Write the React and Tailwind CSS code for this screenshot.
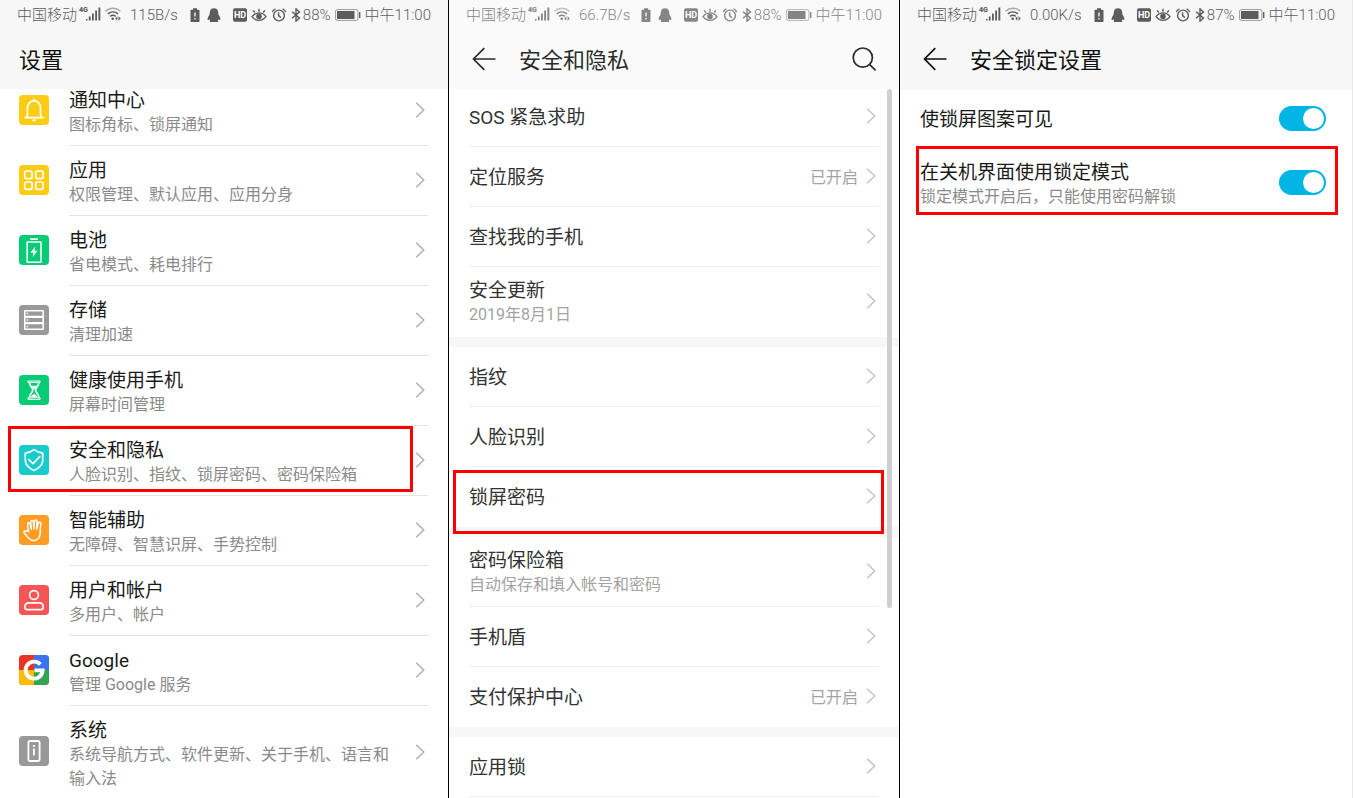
import React, { useState } from "react";

const systemItems = [
  { icon: "bell", title: "通知中心", sub: "图标角标、锁屏通知" },
  { icon: "apps", title: "应用", sub: "权限管理、默认应用、应用分身" },
  { icon: "battery", title: "电池", sub: "省电模式、耗电排行" },
  { icon: "storage", title: "存储", sub: "清理加速" },
  { icon: "hourglass", title: "健康使用手机", sub: "屏幕时间管理" },
  { icon: "shield", title: "安全和隐私", sub: "人脸识别、指纹、锁屏密码、密码保险箱", marked: true },
  { icon: "hand", title: "智能辅助", sub: "无障碍、智慧识屏、手势控制" },
  { icon: "user", title: "用户和帐户", sub: "多用户、帐户" },
  { icon: "google", title: "Google", sub: "管理 Google 服务" },
  { icon: "system", title: "系统", sub: "系统导航方式、软件更新、关于手机、语言和输入法" },
];

const securityGroups = [
  [
    { title: "SOS 紧急求助" },
    { title: "定位服务", value: "已开启" },
    { title: "查找我的手机" },
    { title: "安全更新", sub: "2019年8月1日" },
  ],
  [{ title: "指纹" }, { title: "人脸识别" }, { title: "锁屏密码", marked: true }],
  [
    { title: "密码保险箱", sub: "自动保存和填入帐号和密码" },
    { title: "手机盾" },
    { title: "支付保护中心", value: "已开启" },
  ],
  [{ title: "应用锁" }],
];

const tileColors = {
  bell: "#ffcc14",
  apps: "#ffcc14",
  battery: "#06cc76",
  storage: "#999999",
  hourglass: "#06cc76",
  shield: "#17cccb",
  hand: "#ff9c24",
  user: "#f55555",
  google: "#ea3323",
  system: "#999999",
};

const glyphs = {
  bell: (
    <>
      <path d="M6 22.600h18.400M7.600 22.200c.7-1 .9-2 .9-3.400v-6c0-4 2.700-7 6.500-7s6.500 3 6.500 7v6c0 1.400.2 2.400.9 3.400" />
      <path d="M15 4v2" />
      <path d="M12.800 24.600h4.600c-.3 1.200-1.100 1.800-2.300 1.800s-2-.6-2.300-1.800z" fill="#fff" stroke="none" />
    </>
  ),
  apps: (
    <>
      <rect x="5.700" y="6.200" width="7.400" height="7.400" rx="1.800" />
      <rect x="16.700" y="6.200" width="7.400" height="7.400" rx="1.800" />
      <rect x="5.700" y="17" width="7.400" height="7.400" rx="1.800" />
      <rect x="16.700" y="17" width="7.400" height="7.400" rx="1.800" />
    </>
  ),
  battery: (
    <>
      <path d="M11.800 4.100h6.400" strokeWidth="1.800" />
      <rect x="8.200" y="7" width="13.800" height="20.200" rx="0.500" strokeWidth="1.600" />
      <path d="M16.400 11.200l-5 6.600h3.200l-1 4.400 5-6.400h-3.100z" fill="#fff" stroke="none" />
    </>
  ),
  storage: (
    <>
      <rect x="5" y="5" width="20" height="20" rx="1" fill="#fff" stroke="none" />
      <path d="M6.600 8.600h16.800M6.600 15h16.800M6.600 21.400h16.800" stroke="#999" strokeWidth="4.200" strokeLinecap="butt" />
      <path d="M7.700 8.600h1.500M7.700 15h1.500M7.700 21.400h1.500" strokeWidth="1.500" strokeLinecap="butt" />
    </>
  ),
  hourglass: (
    <>
      <path d="M9.300 6h11.800v1.400H9.300zM9.300 22.800h11.800v1.600H9.300z" strokeWidth="1" />
      <path d="M10.500 7.600c0 4 3.300 5 3.300 7.500s-3.300 3.600-3.300 7.500M19.800 7.600c0 4-3.300 5-3.300 7.500s3.300 3.600 3.300 7.500" />
      <path d="M12 10.800h6.300c-.8 1.600-2.200 2.200-3.100 3.600-1-1.400-2.500-2-3.200-3.600zM15.200 18.500c1.300 1.300 2.600 2 3 3.600h-6.200c.4-1.600 1.900-2.300 3.200-3.600z" fill="#fff" stroke="none" />
    </>
  ),
  shield: (
    <>
      <path d="M15 4.700c2.500 2 5.300 3 8.700 3.400v7.400c0 4.500-3.200 7.400-8.700 10-5.500-2.600-8.700-5.500-8.700-10V8.100c3.400-.4 6.200-1.400 8.700-3.400z" />
      <path d="M9.800 14.600l4.200 4 6.700-6.900" strokeWidth="1.700" />
    </>
  ),
  hand: (
    <path
      d="M9.700 16.800L8.500 9.500c-.2-2 2-2.500 2.500-.6l1.300 5.400-.6-7c-.1-2.200 2.500-2.300 2.700-.2l.5 6.700.6-7.300c.2-2 2.700-1.800 2.600.3l-.4 7.200 1.500-5.600c.6-1.900 2.900-1.300 2.600.6-.5 3-.7 5.200-.6 7.900.1 5-2 8.200-6 8.600h-1.900c-1.700-.2-3-1.400-4.300-3.100-1.200-1.600-2.300-3.100-3.700-4.300-.7-.7-.3-2 .8-2.200 1.300-.2 2.500.200 3.600.9z"
      strokeWidth="1.500"
    />
  ),
  user: (
    <>
      <circle cx="15" cy="10" r="4.400" />
      <path d="M10 17.900h10.200c2.600 0 4 1.900 4 4.200 0 1.900-.6 2.500-2 2.500H7.900c-1.400 0-2-.6-2-2.500 0-2.300 1.500-4.200 4.100-4.200z" />
    </>
  ),
  google: (
    <>
      <path d="M15 0h15v15H15z" fill="#3b73ee" stroke="none" />
      <path d="M0 15h15v15H0z" fill="#fbbc05" stroke="none" />
      <path d="M15 15h15v15H15z" fill="#31a552" stroke="none" />
      <path d="M21.400 9.400A8.500 8.500 0 1 0 23.600 15.400H15.500" strokeWidth="3.900" strokeLinecap="butt" strokeLinejoin="miter" />
    </>
  ),
  system: (
    <>
      <rect x="9.400" y="5" width="11.200" height="20" rx="1.800" strokeWidth="1.800" />
      <path d="M14.900 8.900v2M14.900 12.500v7" strokeWidth="1.900" strokeLinecap="butt" />
    </>
  ),
};

function AppTile({ name }) {
  return (
    <span className="mb-0.5 size-[30px] shrink-0 overflow-hidden rounded" style={{ background: tileColors[name] }}>
      <svg viewBox="0 0 30 30" className="block size-full" fill="none" stroke="#fff" strokeWidth="1.700" strokeLinejoin="round" strokeLinecap="round" aria-hidden="true">
        {glyphs[name]}
      </svg>
    </span>
  );
}

function Chevron({ className }) {
  return (
    <svg viewBox="0 0 10 16" className={`h-4 w-2.5 shrink-0 ${className}`} fill="none" stroke="currentColor" strokeWidth="1.500" aria-hidden="true">
      <path d="M1.200 0.700L8.700 8l-7.500 7.300" />
    </svg>
  );
}

function StatusBar({ speed, charge, className }) {
  return (
    <div className={`flex h-[30px] items-center justify-between px-[17px] text-[15px] leading-5 font-light whitespace-nowrap ${className}`}>
      <div className="flex items-center">
        <span>中国移动</span>
        <svg viewBox="0 0 24 16" className="mb-0.5 ml-0.5 h-4 w-6" fill="currentColor" aria-hidden="true">
          <text x="0" y="6" fontSize="7" fontWeight="900">4G</text>
          <path d="M7 13h1.500v1.500H7zM9.800 10.500h1.800v4H9.800zM13 7.500h1.800v7H13zM16.200 4.500h1.800v10h-1.800zM19.400 1.500h1.900v13h-1.900z" />
        </svg>
        <svg viewBox="0 0 18 16" className="mb-0.5 ml-px h-4 w-[18px]" fill="none" stroke="currentColor" strokeWidth="1.400" aria-hidden="true">
          <path d="M1.500 5.300c4.300-4 10.500-4 14.800 0" opacity=".5" />
          <path d="M3.800 7.900c3-2.600 7.200-2.600 10.200 0M6 10.400c1.800-1.400 4-1.400 5.800 0" />
          <circle cx="8.700" cy="12.800" r="1.300" fill="currentColor" stroke="none" />
          <path d="M13.400 10.300L11.300 12.500l2.100 2.200zM14.600 10.300l2.100 2.200-2.100 2.200z" fill="currentColor" stroke="none" />
        </svg>
        <span className="ml-2">{speed}</span>
      </div>
      <div className="flex items-center">
        <svg viewBox="0 0 10 14" className="mb-px h-3.5 w-2.5" fill="currentColor" aria-hidden="true">
          <path d="M3 .3h4v1.400h1.500c.6 0 1 .4 1 1V13c0 .6-.4 1-1 1h-7c-.6 0-1-.4-1-1V2.700c0-.6.4-1 1-1H3z" />
          <path d="M5 4.500v4M5 10v1.500" stroke="#fff" strokeWidth="1.300" />
        </svg>
        <svg viewBox="0 0 14 14" className="mb-px ml-[7px] size-3.5" fill="currentColor" aria-hidden="true">
          <path d="M7 .2c2.700 0 4.300 2 4.300 4.700 0 1.300.4 2 1.200 3.300.9 1.500 1.200 3.400.6 3.800-.4.300-.9-.2-1.400-.8-.2.700-.5 1-.9 1.300.6.300.8 1.200-.2 1.400H3.400c-1-.2-.8-1.100-.2-1.400-.4-.3-.7-.6-.9-1.300-.5.600-1 1.100-1.400.8-.6-.4-.3-2.300.6-3.800.8-1.300 1.200-2 1.200-3.300C2.700 2.200 4.300.2 7 .2z" />
        </svg>
        <svg viewBox="0 0 14 14" className="mb-px ml-3 size-3.5" fill="currentColor" aria-hidden="true">
          <rect width="14" height="13.500" y=".2" rx="1.800" />
          <text x="7" y="10" fontSize="9" fontWeight="700" fill="#fff" textAnchor="middle">HD</text>
        </svg>
        <svg viewBox="0 0 16 14" className="mb-px ml-1 h-3.5 w-4" fill="none" stroke="currentColor" strokeWidth="1.400" aria-hidden="true">
          <path d="M1 8.600c3.800-5 10.200-5 14 0-3.800 5-10.200 5-14 0zM2.200 2.300l1.600 2.200M8 .8v3M13.800 2.300l-1.600 2.200" />
          <circle cx="8" cy="8.400" r="2.100" fill="currentColor" />
        </svg>
        <svg viewBox="0 0 16 14" className="mb-px ml-1 h-3.5 w-4" fill="none" stroke="currentColor" strokeWidth="1.400" aria-hidden="true">
          <circle cx="8" cy="7.500" r="5.400" />
          <path d="M1.400 4.200C1.700 2.500 2.800 1.300 4.500.8M14.600 4.200C14.300 2.500 13.200 1.300 11.500.8M7.600 4.300v3.300l2.300 2.200" />
        </svg>
        <svg viewBox="0 0 10 14" className="mb-px ml-1 h-3.5 w-2.5" fill="none" stroke="currentColor" strokeWidth="1.400" aria-hidden="true">
          <path d="M1 3.700l7.500 6.400L5 13.200V.8l3.500 3.100L1 10.300" />
        </svg>
        <span className="ml-0.5">{charge}</span>
        <svg viewBox="0 0 26 12" className="mb-px ml-1 h-3 w-[26px]" fill="currentColor" aria-hidden="true">
          <rect x=".6" y=".6" width="22.300" height="10.800" rx="1.500" fill="none" stroke="currentColor" opacity=".6" />
          <path d="M2 2h17.500v8H2zM24 3h1.400v6H24z" />
        </svg>
        <span className="ml-1">中午11:00</span>
      </div>
    </div>
  );
}

function BackButton() {
  return (
    <button type="button" aria-label="返回" className="mr-[23px] mb-0.5 block size-6 shrink-0">
      <svg viewBox="0 0 24 24" className="block size-full" fill="none" stroke="currentColor" strokeWidth="1.700" aria-hidden="true">
        <path d="M23.500 12H1.500M12.300 1.200L1.500 12l10.800 10.800" />
      </svg>
    </button>
  );
}

function SettingsPanel() {
  return (
    <section className="overflow-hidden border-r border-black bg-white">
      <header className="relative z-10 h-[89px] bg-[#f7f7f7]">
        <StatusBar speed="115B/s" charge="88%" className="text-[#5c5c5c]" />
        <h1 className="flex h-[60px] items-center pt-0.5 pl-[19px] text-[22px] leading-8 text-[#111]">设置</h1>
      </header>
      <ul className="-mt-[13px]">
        {systemItems.map((item) => (
          <li key={item.title} className="group relative">
            <a href="#" className="flex items-center pl-[19px]">
              <AppTile name={item.icon} />
              <span className="ml-5 mr-5 flex flex-1 items-center gap-4 border-b border-[#e4e4e4] pt-[13px] pb-2 pr-[3px] group-last:border-b-0 group-last:pb-[7px]">
                <span className="flex-1">
                  <span className="block text-[19px] leading-6 text-[#1a1a1a]">{item.title}</span>
                  <span className="block text-[16px] leading-6 text-[#8a8a8a]">{item.sub}</span>
                </span>
                <Chevron className="mb-1.5 text-[#b0b0b0]" />
              </span>
            </a>
            {item.marked && <span className="pointer-events-none absolute top-0 right-[35px] left-2 h-[66px] border-3 border-[#ff0000]" />}
          </li>
        ))}
      </ul>
    </section>
  );
}

function SecurityPanel() {
  return (
    <section className="relative overflow-hidden border-r border-black bg-white">
      <header className="relative z-10 h-[89px] bg-[#fafafa]">
        <StatusBar speed="66.7B/s" charge="88%" className="text-[#858585]" />
        <div className="flex h-[60px] items-center pr-[23px] pl-[23px] text-[#2b2b2b]">
          <BackButton />
          <h1 className="flex-1 pt-0.5 text-[22px] leading-8">安全和隐私</h1>
          <button type="button" aria-label="搜索" className="mb-0.5 block size-6">
            <svg viewBox="0 0 24 24" className="block size-full" fill="none" stroke="currentColor" strokeWidth="1.700" aria-hidden="true">
              <circle cx="10.800" cy="10.600" r="9.600" />
              <path d="M17.700 17.600l6 5.800" />
            </svg>
          </button>
        </div>
      </header>
      <div className="-mt-0.5 flex flex-col gap-2.5 bg-[#f7f7f7]">
        {securityGroups.map((group, idx) => (
          <ul key={idx} className="bg-white">
            {group.map((item) => (
              <li key={item.title} className="group relative">
                <a
                  href="#"
                  className={`mx-5 flex items-center border-b border-[#ededed] pr-[3px] ${item.sub ? "h-[70px]" : "h-[60px]"} ${idx < 3 ? "group-last:border-transparent" : ""}`}
                >
                  <span className="flex-1 pt-[3px]">
                    <span className="block text-[19px] leading-6 text-[#333]">{item.title}</span>
                    {item.sub && <span className="block text-[16px] leading-6 text-[#a3a3a3]">{item.sub}</span>}
                  </span>
                  {item.value && <span className="mr-2 pt-[3px] text-[16px] leading-6 text-[#a3a3a3]">{item.value}</span>}
                  <Chevron className="mb-0.5 text-[#c4c4c4]" />
                </a>
                {item.marked && <span className="pointer-events-none absolute top-[3px] right-[15px] left-1 z-10 h-16 border-3 border-[#ff0000]" />}
              </li>
            ))}
          </ul>
        ))}
      </div>
      <span className="absolute top-[89px] right-[7px] z-10 h-[519px] w-[5px] rounded-full bg-[#cfcfcf]" />
    </section>
  );
}

function Toggle({ id, checked, onChange }) {
  return (
    <input
      id={id}
      type="checkbox"
      role="switch"
      checked={checked}
      onChange={onChange}
      className="relative h-[25px] w-[47px] shrink-0 appearance-none rounded-full bg-[#c8c8c8] before:absolute before:top-0.5 before:left-0.5 before:size-[21px] before:rounded-full before:bg-white checked:bg-[#00b4e6] checked:before:left-6"
    />
  );
}

function LockPanel() {
  const [patternVisible, setPatternVisible] = useState(true);
  const [lockdown, setLockdown] = useState(true);

  return (
    <section className="overflow-hidden border-r border-[#e8e8e8] bg-white">
      <header className="h-[90px] bg-[#f7f7f7]">
        <StatusBar speed="0.00K/s" charge="87%" className="text-[#5c5c5c]" />
        <div className="flex h-[60px] items-center pl-[23px] text-[#111]">
          <BackButton />
          <h1 className="pt-0.5 text-[22px] leading-8">安全锁定设置</h1>
        </div>
      </header>
      <div className="flex h-[57px] items-center pr-[26px] pl-5">
        <label htmlFor="pattern" className="flex-1 pt-[3px] text-[19px] leading-6 text-[#1a1a1a]">使锁屏图案可见</label>
        <Toggle id="pattern" checked={patternVisible} onChange={(e) => setPatternVisible(e.target.checked)} />
      </div>
      <div className="relative flex h-[71px] items-center pr-[26px] pl-5">
        <label htmlFor="lockdown" className="flex-1 pt-[5px]">
          <span className="block text-[19px] leading-6 text-[#1a1a1a]">在关机界面使用锁定模式</span>
          <span className="block text-[16px] leading-6 text-[#8a8a8a]">锁定模式开启后，只能使用密码解锁</span>
        </label>
        <Toggle id="lockdown" checked={lockdown} onChange={(e) => setLockdown(e.target.checked)} />
        <span className="pointer-events-none absolute -top-px right-3.5 left-4 h-[69px] border-3 border-[#ff0000]" />
      </div>
    </section>
  );
}

export default function App() {
  return (
    <main lang="zh-CN" className="grid min-h-screen grid-cols-[449fr_451fr_453fr] bg-white font-['Roboto','Noto_Sans_CJK_SC',sans-serif]">
      <SettingsPanel />
      <SecurityPanel />
      <LockPanel />
    </main>
  );
}
